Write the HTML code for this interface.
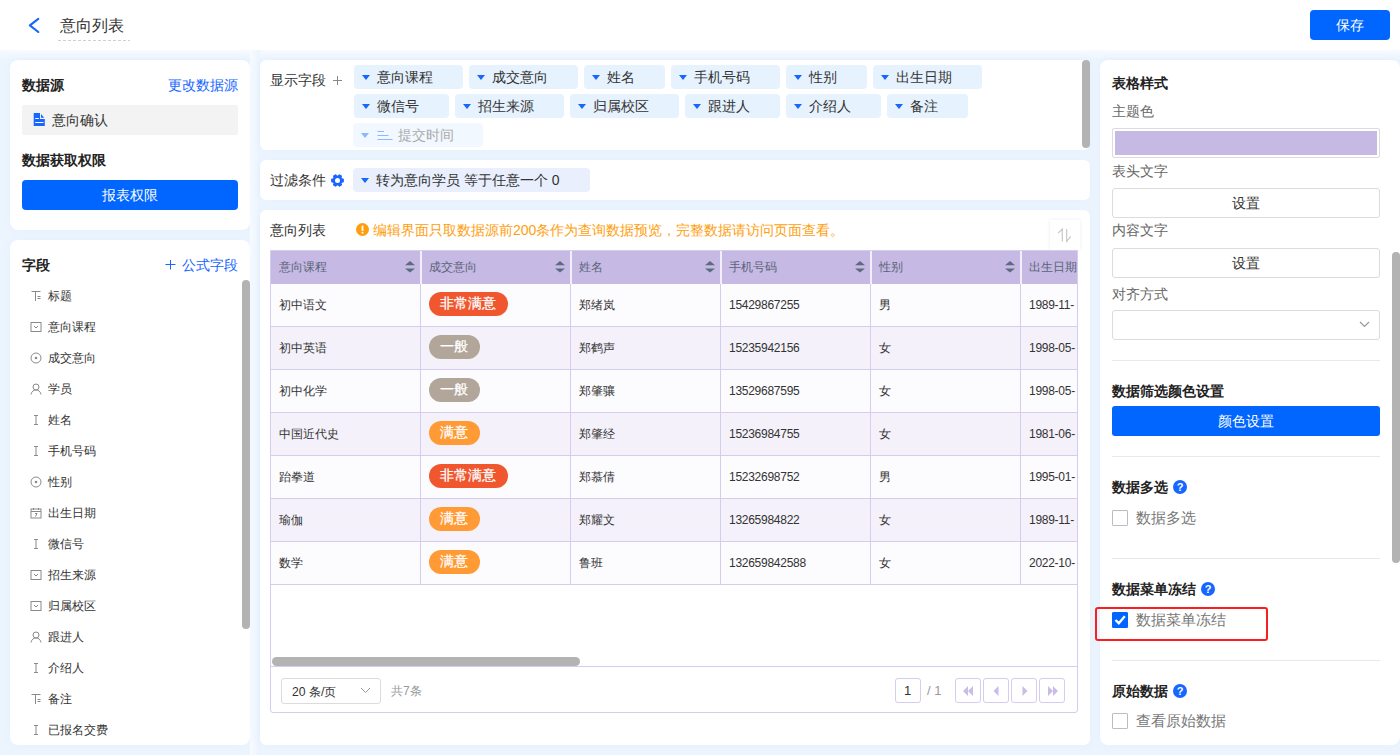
<!DOCTYPE html>
<html><head><meta charset="utf-8">
<style>
*{box-sizing:border-box;margin:0;padding:0}
html,body{width:1400px;height:755px;overflow:hidden}
body{position:relative;background:#ecf5fe;font-family:"Liberation Sans",sans-serif;color:#333;font-size:14px}
.abs{position:absolute}
.card{position:absolute;background:#fff;border-radius:8px;box-shadow:0 0 10px rgba(20,130,240,.045)}
.hdr{position:absolute;left:0;top:0;width:1400px;height:50px;background:#fff}
.b{font-weight:bold}
.t{position:absolute;white-space:nowrap;line-height:1}
/* tags */
.tag{position:absolute;height:24px;background:#e6f2fe;border-radius:4px;font-size:14px;color:#333;line-height:24px;white-space:nowrap}
.tag .tri{position:absolute;left:8px;top:10px;width:0;height:0;border-left:4px solid transparent;border-right:4px solid transparent;border-top:5px solid #1766ff}
.tag span{position:absolute;left:23px;top:0}
/* fields */
.fld{position:absolute;left:30px;height:14px;font-size:12px;color:#333;white-space:nowrap}
.fld svg{position:absolute;left:0;top:1px}
.fld span{position:absolute;left:18px;top:0;line-height:14px}
/* table */
.tbl{position:absolute;left:270px;top:250px;width:808px;height:463px;border:1px solid #d6ccef;border-radius:0 0 3px 3px;overflow:hidden;background:#fff}
.th{position:absolute;top:0;height:33px;background:#c6b9e4}
.row{position:absolute;left:0;width:808px;height:43px;border-bottom:1px solid #d6ccef}
.cell{position:absolute;top:0;height:42px;line-height:42px;font-size:12px;color:#333;padding-left:8px;white-space:nowrap}
.pill{position:absolute;left:8px;top:8px;height:24px;line-height:24px;border-radius:12px;color:#fff;padding:0 12px 0 11px;font-size:13.5px;-webkit-text-stroke:0.25px #fff}
.rbtn{position:absolute;left:1112px;width:268px;height:30px;border:1px solid #dcdcdc;border-radius:3px;background:#fff;font-size:14px;text-align:center;line-height:28px;color:#333}
.divl{position:absolute;left:1112px;width:268px;height:1px;background:#e8e8e8}
.lbl{position:absolute;left:1112px;font-size:14px;color:#666;white-space:nowrap;line-height:14px}
.sec{position:absolute;left:1112px;font-size:14px;font-weight:bold;color:#222;white-space:nowrap;line-height:14px}
.cb{position:absolute;left:1112px;width:16px;height:16px;border:1px solid #b9bdc6;border-radius:1px;background:#fff}
.q{position:absolute;width:14px;height:14px;border-radius:50%;background:#1766ff;color:#fff;font-size:11px;font-weight:bold;text-align:center;line-height:14px}
.sb{position:absolute;background:#b3b3b3;border-radius:4px}
.pg{position:absolute;top:678px;width:26px;height:25px;border:1px solid #d6ccef;border-radius:3px;background:#fff}
</style></head><body>

<!-- header -->
<div class="abs" style="left:0;top:50px;width:1400px;height:11px;background:linear-gradient(#f7fbff,#eaf3fe)"></div>
<div class="abs" style="left:250px;top:50px;width:10px;height:705px;background:linear-gradient(90deg,#f9fcff,#eaf3fe)"></div>
<div class="hdr"></div>
<svg class="abs" style="left:28px;top:17px" width="13" height="17" viewBox="0 0 13 17"><path d="M10.3 1.8 L1.9 8.4 L10.3 15" fill="none" stroke="#1766ff" stroke-width="2.1" stroke-linecap="round" stroke-linejoin="round"/></svg>
<div class="t" style="left:60px;top:18px;font-size:16px;color:#333">意向列表</div>
<div class="abs" style="left:58px;top:40px;width:72px;height:1px;background-image:linear-gradient(90deg,#d0d0d0 0,#d0d0d0 3px,transparent 3px);background-size:5px 1px"></div>
<div class="abs" style="left:1310px;top:10px;width:80px;height:30px;background:#0066ff;border-radius:4px;color:#fff;font-size:14px;text-align:center;line-height:30px">保存</div>

<!-- left card 1 -->
<div class="card" style="left:10px;top:60px;width:240px;height:170px"></div>
<div class="t b" style="left:22px;top:78px;font-size:14px;color:#222">数据源</div>
<div class="t" style="left:168px;top:78px;font-size:14px;color:#1766ff">更改数据源</div>
<div class="abs" style="left:22px;top:105px;width:216px;height:30px;background:#f3f3f3;border-radius:2px"></div>
<svg class="abs" style="left:33px;top:113px" width="12" height="13" viewBox="0 0 12 13"><path d="M0.7 0H7V6H11.8V13H0.7Z" fill="#1766ff"/><path d="M8 0.9V4.7H11.2Z" fill="#1766ff"/><rect x="2.2" y="5" width="3.6" height="1" fill="#fff"/><rect x="2.2" y="9" width="8.3" height="1" fill="#fff"/></svg>
<div class="t" style="left:52px;top:113px;font-size:14px;color:#333">意向确认</div>
<div class="t b" style="left:22px;top:153px;font-size:14px;color:#222">数据获取权限</div>
<div class="abs" style="left:22px;top:180px;width:216px;height:30px;background:#0066ff;border-radius:4px;color:#fff;font-size:14px;text-align:center;line-height:30px">报表权限</div>

<!-- left card 2 -->
<div class="card" style="left:10px;top:240px;width:240px;height:505px"></div>
<div class="t b" style="left:22px;top:258px;font-size:14px;color:#222">字段</div>
<svg class="abs" style="left:165px;top:260px" width="11" height="10" viewBox="0 0 11 10"><path d="M5.5 0V9.5M0.5 4.5H10.5" stroke="#1766ff" stroke-width="1"/></svg>
<div class="t" style="left:182px;top:258px;font-size:14px;color:#1766ff">公式字段</div>
<div class="sb" style="left:242px;top:280px;width:8px;height:349px"></div>
<div class="fld" style="top:289px"><svg width="12" height="12" viewBox="0 0 12 12"><path d="M1.5 1.5H10.5M5.5 1.5V11M7.5 6.5H10.5M7.5 8.5H10.5" stroke="#8a8a8a" stroke-width="1" fill="none"/></svg><span>标题</span></div>
<div class="fld" style="top:320px"><svg width="12" height="12" viewBox="0 0 12 12"><rect x="1" y="1.5" width="10" height="9" stroke="#8a8a8a" stroke-width="1" fill="none"/><path d="M4 5L6 7L8 5" stroke="#8a8a8a" stroke-width="1" fill="none"/></svg><span>意向课程</span></div>
<div class="fld" style="top:351px"><svg width="12" height="12" viewBox="0 0 12 12"><circle cx="6" cy="6" r="5" stroke="#8a8a8a" stroke-width="1" fill="none"/><circle cx="6" cy="6" r="1.3" fill="#8a8a8a"/></svg><span>成交意向</span></div>
<div class="fld" style="top:382px"><svg width="12" height="12" viewBox="0 0 12 12"><circle cx="6" cy="4" r="3" stroke="#8a8a8a" stroke-width="1" fill="none"/><path d="M1 11.5C1.5 8.5 3.5 7 6 7S10.5 8.5 11 11.5" stroke="#8a8a8a" stroke-width="1" fill="none"/></svg><span>学员</span></div>
<div class="fld" style="top:413px"><svg width="12" height="12" viewBox="0 0 12 12"><path d="M4 1.5H8M6 1.5V10.5M4 10.5H8" stroke="#8a8a8a" stroke-width="1" fill="none"/></svg><span>姓名</span></div>
<div class="fld" style="top:444px"><svg width="12" height="12" viewBox="0 0 12 12"><path d="M4 1.5H8M6 1.5V10.5M4 10.5H8" stroke="#8a8a8a" stroke-width="1" fill="none"/></svg><span>手机号码</span></div>
<div class="fld" style="top:475px"><svg width="12" height="12" viewBox="0 0 12 12"><circle cx="6" cy="6" r="5" stroke="#8a8a8a" stroke-width="1" fill="none"/><circle cx="6" cy="6" r="1.3" fill="#8a8a8a"/></svg><span>性别</span></div>
<div class="fld" style="top:506px"><svg width="12" height="12" viewBox="0 0 12 12"><rect x="1" y="2" width="10" height="9" stroke="#8a8a8a" stroke-width="1" fill="none"/><path d="M1 4.5H11M3.5 1V3M8.5 1V3M5 6.5H7L5.5 9.5" stroke="#8a8a8a" stroke-width="1" fill="none"/></svg><span>出生日期</span></div>
<div class="fld" style="top:537px"><svg width="12" height="12" viewBox="0 0 12 12"><path d="M4 1.5H8M6 1.5V10.5M4 10.5H8" stroke="#8a8a8a" stroke-width="1" fill="none"/></svg><span>微信号</span></div>
<div class="fld" style="top:568px"><svg width="12" height="12" viewBox="0 0 12 12"><rect x="1" y="1.5" width="10" height="9" stroke="#8a8a8a" stroke-width="1" fill="none"/><path d="M4 5L6 7L8 5" stroke="#8a8a8a" stroke-width="1" fill="none"/></svg><span>招生来源</span></div>
<div class="fld" style="top:599px"><svg width="12" height="12" viewBox="0 0 12 12"><rect x="1" y="1.5" width="10" height="9" stroke="#8a8a8a" stroke-width="1" fill="none"/><path d="M4 5L6 7L8 5" stroke="#8a8a8a" stroke-width="1" fill="none"/></svg><span>归属校区</span></div>
<div class="fld" style="top:630px"><svg width="12" height="12" viewBox="0 0 12 12"><circle cx="6" cy="4" r="3" stroke="#8a8a8a" stroke-width="1" fill="none"/><path d="M1 11.5C1.5 8.5 3.5 7 6 7S10.5 8.5 11 11.5" stroke="#8a8a8a" stroke-width="1" fill="none"/></svg><span>跟进人</span></div>
<div class="fld" style="top:661px"><svg width="12" height="12" viewBox="0 0 12 12"><path d="M4 1.5H8M6 1.5V10.5M4 10.5H8" stroke="#8a8a8a" stroke-width="1" fill="none"/></svg><span>介绍人</span></div>
<div class="fld" style="top:692px"><svg width="12" height="12" viewBox="0 0 12 12"><path d="M1.5 1.5H10.5M5.5 1.5V11M7.5 6.5H10.5M7.5 8.5H10.5" stroke="#8a8a8a" stroke-width="1" fill="none"/></svg><span>备注</span></div>
<div class="fld" style="top:723px"><svg width="12" height="12" viewBox="0 0 12 12"><path d="M4 1.5H8M6 1.5V10.5M4 10.5H8" stroke="#8a8a8a" stroke-width="1" fill="none"/></svg><span>已报名交费</span></div>

<!-- middle cards -->
<div class="card" style="left:260px;top:60px;width:830px;height:90px;border-radius:6px"></div>
<div class="t" style="left:270px;top:73px;font-size:14px;color:#333">显示字段</div>
<svg class="abs" style="left:333px;top:76px" width="9" height="9" viewBox="0 0 9 9"><path d="M4.5 0V9M0 4.5H9" stroke="#888" stroke-width="1"/></svg>
<div class="tag" style="left:353.5px;top:65px;width:109px"><i class="tri"></i><span>意向课程</span></div>
<div class="tag" style="left:468.5px;top:65px;width:109px"><i class="tri"></i><span>成交意向</span></div>
<div class="tag" style="left:583.5px;top:65px;width:81px"><i class="tri"></i><span>姓名</span></div>
<div class="tag" style="left:670.5px;top:65px;width:109px"><i class="tri"></i><span>手机号码</span></div>
<div class="tag" style="left:785.5px;top:65px;width:81px"><i class="tri"></i><span>性别</span></div>
<div class="tag" style="left:872.5px;top:65px;width:109px"><i class="tri"></i><span>出生日期</span></div>
<div class="tag" style="left:353.5px;top:94px;width:95px"><i class="tri"></i><span>微信号</span></div>
<div class="tag" style="left:454.5px;top:94px;width:109px"><i class="tri"></i><span>招生来源</span></div>
<div class="tag" style="left:569.5px;top:94px;width:109px"><i class="tri"></i><span>归属校区</span></div>
<div class="tag" style="left:684.5px;top:94px;width:95px"><i class="tri"></i><span>跟进人</span></div>
<div class="tag" style="left:785.5px;top:94px;width:95px"><i class="tri"></i><span>介绍人</span></div>
<div class="tag" style="left:886.5px;top:94px;width:81px"><i class="tri"></i><span>备注</span></div>
<div class="tag" style="left:353px;top:123px;width:130px;background:#f2f8ff;color:#aaa"><i class="tri" style="border-top-color:#8fb6ff"></i><svg style="position:absolute;left:23px;top:7px" width="17" height="11" viewBox="0 0 16 11"><path d="M1 1.5H7.5M1 5.5H12M1 9.5H16" stroke="#8fb6ff" stroke-width="1"/></svg><span style="left:45px">提交时间</span></div>
<div class="sb" style="left:1082px;top:60px;width:8px;height:88px"></div>

<div class="card" style="left:260px;top:160px;width:830px;height:40px;border-radius:6px"></div>
<div class="t" style="left:270px;top:173px;font-size:14px;color:#333">过滤条件</div>
<svg class="abs" style="left:331px;top:173.5px" width="13" height="13" viewBox="-6.5 -6.5 13 13"><g fill="#1766ff"><circle r="5"/><rect x="-6.4" y="-1.9" width="12.8" height="3.8" rx=".9"/><rect x="-6.4" y="-1.9" width="12.8" height="3.8" rx=".9" transform="rotate(60)"/><rect x="-6.4" y="-1.9" width="12.8" height="3.8" rx=".9" transform="rotate(120)"/></g><circle r="2.5" fill="#fff"/></svg>
<div class="tag" style="left:353px;top:168px;width:237px;background:#e9effd"><i class="tri"></i><span>转为意向学员 等于任意一个 0</span></div>

<div class="card" style="left:260px;top:210px;width:830px;height:535px;border-radius:6px"></div>
<div class="t" style="left:270px;top:223px;font-size:14px;color:#333">意向列表</div>
<svg class="abs" style="left:356px;top:223px" width="13" height="13" viewBox="0 0 13 13"><circle cx="6.5" cy="6.5" r="6.5" fill="#ff9e0d"/><rect x="5.6" y="2.5" width="1.8" height="5.5" rx=".6" fill="#fff"/><circle cx="6.5" cy="9.8" r="1" fill="#fff"/></svg>
<div class="t" style="left:373px;top:223px;font-size:14px;color:#ff9e0d">编辑界面只取数据源前200条作为查询数据预览，完整数据请访问页面查看。</div>
<div class="abs" style="left:1050px;top:220px;width:30px;height:30px;background:#fff;box-shadow:0 0 4px rgba(0,0,0,.08)"></div>
<svg class="abs" style="left:1050px;top:220px" width="30" height="30" viewBox="0 0 30 30"><path d="M8.1 13.1L12.3 9.1V21.5M16.7 9.1V21.5L20.7 16.3" fill="none" stroke="#c4c4c4" stroke-width="1.1"/></svg>

<div class="tbl"><div class="th" style="left:0;width:808px"></div>
<div class="abs" style="left:0px;top:0;width:150px;height:33px;font-size:12px;color:#5a6478;line-height:33px;padding-left:8px;white-space:nowrap;overflow:hidden">意向课程<svg style="position:absolute;right:6px;top:9.5px" width="10" height="12" viewBox="0 0 10 12"><path d="M0 4.2L5 0L10 4.2Z M0 7.6L5 11.6L10 7.6Z" fill="#5d6b80"/></svg></div>
<div class="abs" style="left:150px;top:0;width:150px;height:33px;font-size:12px;color:#5a6478;line-height:33px;padding-left:8px;white-space:nowrap;overflow:hidden">成交意向<svg style="position:absolute;right:6px;top:9.5px" width="10" height="12" viewBox="0 0 10 12"><path d="M0 4.2L5 0L10 4.2Z M0 7.6L5 11.6L10 7.6Z" fill="#5d6b80"/></svg></div>
<div class="abs" style="left:149px;top:0;width:2px;height:33px;background:#f4f0fb"></div>
<div class="abs" style="left:300px;top:0;width:150px;height:33px;font-size:12px;color:#5a6478;line-height:33px;padding-left:8px;white-space:nowrap;overflow:hidden">姓名<svg style="position:absolute;right:6px;top:9.5px" width="10" height="12" viewBox="0 0 10 12"><path d="M0 4.2L5 0L10 4.2Z M0 7.6L5 11.6L10 7.6Z" fill="#5d6b80"/></svg></div>
<div class="abs" style="left:299px;top:0;width:2px;height:33px;background:#f4f0fb"></div>
<div class="abs" style="left:450px;top:0;width:150px;height:33px;font-size:12px;color:#5a6478;line-height:33px;padding-left:8px;white-space:nowrap;overflow:hidden">手机号码<svg style="position:absolute;right:6px;top:9.5px" width="10" height="12" viewBox="0 0 10 12"><path d="M0 4.2L5 0L10 4.2Z M0 7.6L5 11.6L10 7.6Z" fill="#5d6b80"/></svg></div>
<div class="abs" style="left:449px;top:0;width:2px;height:33px;background:#f4f0fb"></div>
<div class="abs" style="left:600px;top:0;width:150px;height:33px;font-size:12px;color:#5a6478;line-height:33px;padding-left:8px;white-space:nowrap;overflow:hidden">性别<svg style="position:absolute;right:6px;top:9.5px" width="10" height="12" viewBox="0 0 10 12"><path d="M0 4.2L5 0L10 4.2Z M0 7.6L5 11.6L10 7.6Z" fill="#5d6b80"/></svg></div>
<div class="abs" style="left:599px;top:0;width:2px;height:33px;background:#f4f0fb"></div>
<div class="abs" style="left:750px;top:0;width:58px;height:33px;font-size:12px;color:#5a6478;line-height:33px;padding-left:8px;white-space:nowrap;overflow:hidden">出生日期</div>
<div class="abs" style="left:749px;top:0;width:2px;height:33px;background:#f4f0fb"></div>
<div class="row" style="top:33px;background:#fcfbfe"></div>
<div class="cell" style="left:0px;top:33px;width:150px">初中语文</div>
<div class="cell" style="left:150px;top:33px;width:150px"><span class="pill" style="background:#f0572e">非常满意</span></div>
<div class="cell" style="left:300px;top:33px;width:150px">郑绪岚</div>
<div class="cell" style="left:450px;top:33px;width:150px"><span style="letter-spacing:-0.27px">15429867255</span></div>
<div class="cell" style="left:600px;top:33px;width:150px">男</div>
<div class="cell" style="left:750px;top:33px;width:150px"><span style="letter-spacing:-0.27px">1989-11-</span></div>
<div class="row" style="top:76px;background:#f4f1fa"></div>
<div class="cell" style="left:0px;top:76px;width:150px">初中英语</div>
<div class="cell" style="left:150px;top:76px;width:150px"><span class="pill" style="background:#b2a59a">一般</span></div>
<div class="cell" style="left:300px;top:76px;width:150px">郑鹤声</div>
<div class="cell" style="left:450px;top:76px;width:150px"><span style="letter-spacing:-0.27px">15235942156</span></div>
<div class="cell" style="left:600px;top:76px;width:150px">女</div>
<div class="cell" style="left:750px;top:76px;width:150px"><span style="letter-spacing:-0.27px">1998-05-</span></div>
<div class="row" style="top:119px;background:#fcfbfe"></div>
<div class="cell" style="left:0px;top:119px;width:150px">初中化学</div>
<div class="cell" style="left:150px;top:119px;width:150px"><span class="pill" style="background:#b2a59a">一般</span></div>
<div class="cell" style="left:300px;top:119px;width:150px">郑肇骧</div>
<div class="cell" style="left:450px;top:119px;width:150px"><span style="letter-spacing:-0.27px">13529687595</span></div>
<div class="cell" style="left:600px;top:119px;width:150px">女</div>
<div class="cell" style="left:750px;top:119px;width:150px"><span style="letter-spacing:-0.27px">1998-05-</span></div>
<div class="row" style="top:162px;background:#f4f1fa"></div>
<div class="cell" style="left:0px;top:162px;width:150px">中国近代史</div>
<div class="cell" style="left:150px;top:162px;width:150px"><span class="pill" style="background:#ff9a35">满意</span></div>
<div class="cell" style="left:300px;top:162px;width:150px">郑肇经</div>
<div class="cell" style="left:450px;top:162px;width:150px"><span style="letter-spacing:-0.27px">15236984755</span></div>
<div class="cell" style="left:600px;top:162px;width:150px">女</div>
<div class="cell" style="left:750px;top:162px;width:150px"><span style="letter-spacing:-0.27px">1981-06-</span></div>
<div class="row" style="top:205px;background:#fcfbfe"></div>
<div class="cell" style="left:0px;top:205px;width:150px">跆拳道</div>
<div class="cell" style="left:150px;top:205px;width:150px"><span class="pill" style="background:#f0572e">非常满意</span></div>
<div class="cell" style="left:300px;top:205px;width:150px">郑慕倩</div>
<div class="cell" style="left:450px;top:205px;width:150px"><span style="letter-spacing:-0.27px">15232698752</span></div>
<div class="cell" style="left:600px;top:205px;width:150px">男</div>
<div class="cell" style="left:750px;top:205px;width:150px"><span style="letter-spacing:-0.27px">1995-01-</span></div>
<div class="row" style="top:248px;background:#f4f1fa"></div>
<div class="cell" style="left:0px;top:248px;width:150px">瑜伽</div>
<div class="cell" style="left:150px;top:248px;width:150px"><span class="pill" style="background:#ff9a35">满意</span></div>
<div class="cell" style="left:300px;top:248px;width:150px">郑耀文</div>
<div class="cell" style="left:450px;top:248px;width:150px"><span style="letter-spacing:-0.27px">13265984822</span></div>
<div class="cell" style="left:600px;top:248px;width:150px">女</div>
<div class="cell" style="left:750px;top:248px;width:150px"><span style="letter-spacing:-0.27px">1989-11-</span></div>
<div class="row" style="top:291px;background:#fcfbfe"></div>
<div class="cell" style="left:0px;top:291px;width:150px">数学</div>
<div class="cell" style="left:150px;top:291px;width:150px"><span class="pill" style="background:#ff9a35">满意</span></div>
<div class="cell" style="left:300px;top:291px;width:150px">鲁班</div>
<div class="cell" style="left:450px;top:291px;width:150px"><span style="letter-spacing:-0.27px">132659842588</span></div>
<div class="cell" style="left:600px;top:291px;width:150px">女</div>
<div class="cell" style="left:750px;top:291px;width:150px"><span style="letter-spacing:-0.27px">2022-10-</span></div>
<div class="abs" style="left:149px;top:33px;width:1px;height:301px;background:#d6ccef"></div>
<div class="abs" style="left:299px;top:33px;width:1px;height:301px;background:#d6ccef"></div>
<div class="abs" style="left:449px;top:33px;width:1px;height:301px;background:#d6ccef"></div>
<div class="abs" style="left:599px;top:33px;width:1px;height:301px;background:#d6ccef"></div>
<div class="abs" style="left:749px;top:33px;width:1px;height:301px;background:#d6ccef"></div>
<div class="sb" style="left:1px;top:406px;width:308px;height:9px;border-radius:4.5px"></div>
<div class="abs" style="left:0;top:415px;width:808px;height:1px;background:#d6ccef"></div></div>


<!-- pagination -->
<div class="abs" style="left:281px;top:678px;width:100px;height:26px;border:1px solid #dcdcdc;border-radius:3px;background:#fff"></div>
<div class="t" style="left:292px;top:686px;font-size:12.2px;color:#333">20 条/页</div>
<svg class="abs" style="left:360px;top:687px" width="11" height="7" viewBox="0 0 11 7"><path d="M1 1 L5.5 5.5 L10 1" fill="none" stroke="#999" stroke-width="1"/></svg>
<div class="t" style="left:391px;top:685px;font-size:12px;color:#999">共7条</div>
<div class="pg" style="left:895px;width:26px"></div>
<div class="t" style="left:904px;top:684px;font-size:13px;color:#333">1</div>
<div class="t" style="left:927px;top:684px;font-size:13px;color:#999">/ 1</div>
<div class="pg" style="left:955px"><svg style="position:absolute;left:6px;top:7px" width="12" height="10" viewBox="0 0 12 10"><path d="M6 0L1 5L6 10Z M11 0L6 5L11 10Z" fill="#c9bde8"/></svg></div>
<div class="pg" style="left:983px"><svg style="position:absolute;left:9px;top:7px" width="6" height="10" viewBox="0 0 6 10"><path d="M5.5 0L0.5 5L5.5 10Z" fill="#c9bde8"/></svg></div>
<div class="pg" style="left:1011px"><svg style="position:absolute;left:10px;top:7px" width="6" height="10" viewBox="0 0 6 10"><path d="M0.5 0L5.5 5L0.5 10Z" fill="#c9bde8"/></svg></div>
<div class="pg" style="left:1039px"><svg style="position:absolute;left:7px;top:7px" width="12" height="10" viewBox="0 0 12 10"><path d="M1 0L6 5L1 10Z M6 0L11 5L6 10Z" fill="#c9bde8"/></svg></div>

<!-- right card -->
<div class="card" style="left:1100px;top:60px;width:300px;height:685px"></div>
<div class="sb" style="left:1392px;top:252px;width:8px;height:311px"></div>
<div class="sec" style="top:76px">表格样式</div>
<div class="lbl" style="top:104px">主题色</div>
<div class="abs" style="left:1112px;top:128px;width:268px;height:30px;border:1px solid #dcdcdc;border-radius:2px;padding:2px"><div style="width:100%;height:100%;background:#c6b9e4"></div></div>
<div class="lbl" style="top:164px">表头文字</div>
<div class="rbtn" style="top:188px">设置</div>
<div class="lbl" style="top:223px">内容文字</div>
<div class="rbtn" style="top:248px">设置</div>
<div class="lbl" style="top:287px">对齐方式</div>
<div class="rbtn" style="top:310px"></div>
<svg class="abs" style="left:1359px;top:321px" width="11" height="7" viewBox="0 0 11 7"><path d="M1 1 L5.5 5.5 L10 1" fill="none" stroke="#999" stroke-width="1.2"/></svg>
<div class="divl" style="top:360px"></div>
<div class="sec" style="top:384px">数据筛选颜色设置</div>
<div class="abs" style="left:1112px;top:406px;width:268px;height:30px;background:#0066ff;border-radius:3px;color:#fff;font-size:14px;text-align:center;line-height:30px">颜色设置</div>
<div class="divl" style="top:456px"></div>
<div class="sec" style="top:480px">数据多选</div>
<div class="q" style="left:1173px;top:480px">?</div>
<div class="cb" style="top:510px"></div>
<div class="lbl" style="left:1136px;top:511px;color:#777;font-size:14.5px">数据多选</div>
<div class="divl" style="top:558px"></div>
<div class="sec" style="top:582px">数据菜单冻结</div>
<div class="q" style="left:1201px;top:582px">?</div>
<div class="cb" style="top:612px;background:#0066ff;border-color:#0066ff"><svg width="14" height="14" viewBox="0 0 14 14" style="position:absolute;left:0;top:0"><path d="M2.5 7 L5.8 10.2 L11.8 3.2" fill="none" stroke="#fff" stroke-width="2.3"/></svg></div>
<div class="lbl" style="left:1136px;top:613px;color:#777;font-size:14.5px">数据菜单冻结</div>
<div class="abs" style="left:1095px;top:607px;width:173px;height:34px;border:2px solid #fa1e1e;border-radius:3px"></div>
<div class="divl" style="top:660px"></div>
<div class="sec" style="top:684px">原始数据</div>
<div class="q" style="left:1173px;top:684px">?</div>
<div class="cb" style="top:713px"></div>
<div class="lbl" style="left:1136px;top:714px;color:#777;font-size:14.5px">查看原始数据</div>

</body></html>
